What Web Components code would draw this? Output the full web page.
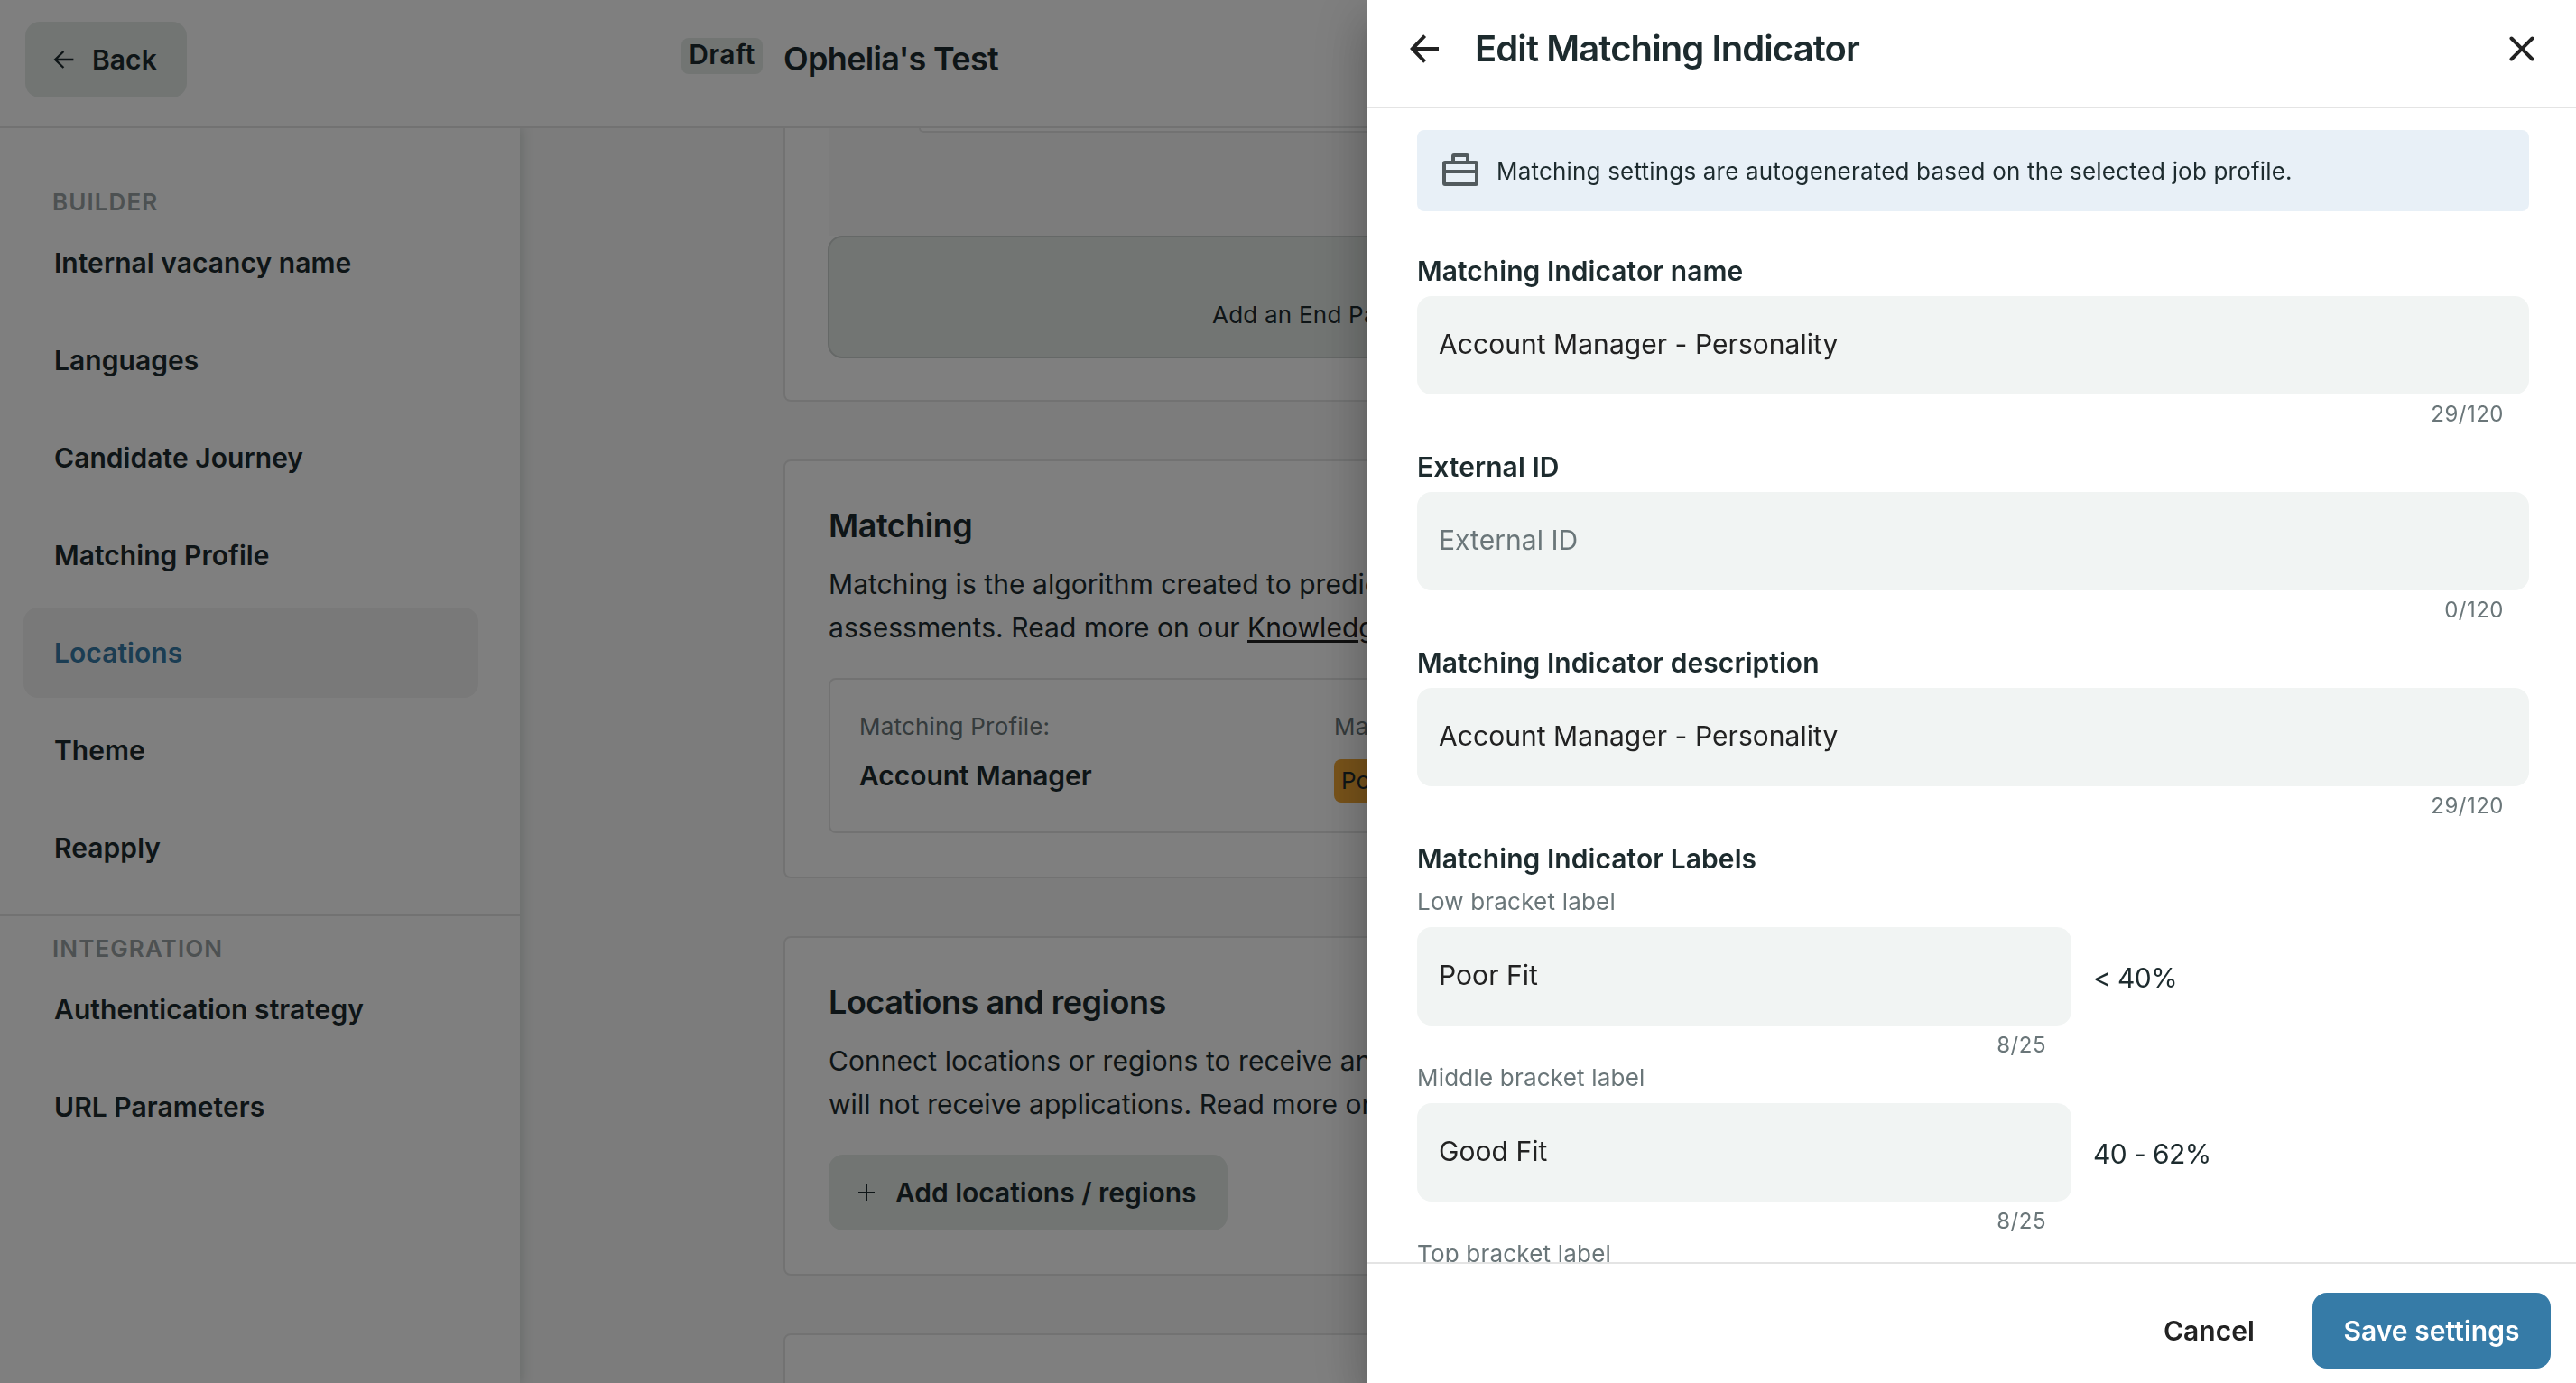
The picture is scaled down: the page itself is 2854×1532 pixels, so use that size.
<!DOCTYPE html>
<html lang="en">
<head>
  <meta charset="utf-8">
  <title>Ophelia's Test</title>
  <style>
    html, body {
      margin: 0;
      height: 100%;
      overflow: hidden;
    }
    body {
      --text: #1d2b2e;
      --muted: #6a7679;
      --line: #e4e5e5;
      --button: #e5eae7;
      --primary: #367ba7;
      font-family: Inter, 'Liberation Sans', sans-serif;
      font-size: 30px;
      line-height: 48px;
      letter-spacing: 0.05px;
      color: var(--text);
    }
  </style>
</head>
<body>
  <vacancy-page></vacancy-page>
  <page-overlay></page-overlay>
  <indicator-drawer></indicator-drawer>

  <script>
    class BaseElement extends HTMLElement {
      constructor() {
        super();
        this.attachShadow({ mode: 'open' });
      }

      connectedCallback() {
        const template = document.createElement('template');
        template.innerHTML = `
          <style>
            * { box-sizing: border-box; }
            ${ this.setStyles() }
          </style>
          ${ this.createTemplate() }
        `;
        this.shadowRoot.appendChild(template.content.cloneNode(true));
      }

      createTemplate() {
        return '<slot></slot>';
      }

      setStyles() {
        return ':host { display: block; }';
      }
    }

    class UiIcon extends BaseElement {
      createTemplate() {
        const icons = {
          'arrow-small': '<svg width="24" height="24" viewBox="0 0 24 24" stroke-width="2.4"><path d="M12.4 3 L3.2 12 L12.4 21 M3.2 12 H23.4"/></svg>',
          'arrow': '<svg width="36" height="36" viewBox="0 0 36 36" stroke-width="4"><path d="M18.6 3.6 L4.8 18 L18.6 32.4 M4.8 18 H34"/></svg>',
          'plus': '<svg width="20" height="20" viewBox="0 0 20 20" stroke-width="2"><path d="M10 1 V19 M1 10 H19"/></svg>',
          'close': '<svg width="32" height="32" viewBox="0 0 32 32" stroke-width="4" stroke-linecap="round"><path d="M4.5 4.5 L27.5 27.5 M27.5 4.5 L4.5 27.5"/></svg>',
          'briefcase': '<svg width="40" height="36" viewBox="0 0 40 36" stroke-width="4" stroke-linejoin="round"><path d="M3 10 H37 Q38 10 38 11 V33 Q38 34 37 34 H3 Q2 34 2 33 V11 Q2 10 3 10 Z M2 20 H38 M12 10 V3 Q12 2 13 2 H27 Q28 2 28 3 V10"/></svg>'
        };
        return icons[this.getAttribute('name')];
      }

      setStyles() {
        return /*css*/ `
          :host { display: flex; flex: none; }
          svg { fill: none; stroke: currentColor; }
        `;
      }
    }

    class UiButton extends BaseElement {
      setStyles() {
        return /*css*/ `
          :host {
            display: flex;
            align-items: center;
            flex: none;
            height: 84px;
            padding: 0 34px;
            border-radius: 16px;
            font-weight: 600;
            background: var(--button);
            box-sizing: border-box;
            white-space: nowrap;
          }
          :host([variant="primary"]) {
            background: var(--primary);
            color: #fff;
          }
          :host([variant="text"]) {
            background: none;
            color: #222;
          }
        `;
      }
    }

    class PageHeader extends BaseElement {
      createTemplate() {
        return /*html*/ `
          <ui-button><ui-icon name="arrow-small"></ui-icon>Back</ui-button>
          <span class="badge">Draft</span>
          <h1><slot></slot></h1>
        `;
      }

      setStyles() {
        return /*css*/ `
          :host {
            display: flex;
            align-items: flex-start;
            flex: none;
            height: 142px;
            padding: 24px 28px;
            background: #fff;
            border-bottom: 2px solid var(--line);
            box-sizing: border-box;
          }
          ui-button {
            width: 179px;
            padding: 0 0 0 30px;
          }
          ui-icon { margin-right: 20px; }
          .badge {
            width: 90px;
            height: 40px;
            margin: 18px 23px 0 548px;
            border-radius: 8px;
            background: var(--button);
            font-weight: 600;
            line-height: 36px;
            letter-spacing: 0.4px;
            text-align: center;
          }
          h1 {
            margin: 17px 0 0;
            font-size: 36px;
            font-weight: 600;
            letter-spacing: -0.68px;
          }
        `;
      }
    }

    class NavItem extends BaseElement {
      setStyles() {
        return /*css*/ `
          :host {
            display: flex;
            align-items: center;
            height: 100px;
            padding-left: 34px;
            border-radius: 16px;
            font-weight: 600;
            box-sizing: border-box;
          }
          :host([active]) {
            background: #f2f2f2;
            color: var(--primary);
          }
        `;
      }
    }

    class NavSection extends BaseElement {
      createTemplate() {
        return /*html*/ `
          <div class="title">${ this.getAttribute('heading') }</div>
          <div class="items"><slot></slot></div>
        `;
      }

      setStyles() {
        return /*css*/ `
          :host {
            display: block;
            padding: 64px 46px 24px 26px;
          }
          :host(:not(:first-of-type)) {
            padding-top: 18px;
            border-top: 2px solid var(--line);
          }
          .title {
            padding-left: 32px;
            color: #9aa3a4;
            font-size: 26px;
            font-weight: 600;
            line-height: 35px;
            letter-spacing: 1.1px;
          }
          .items {
            display: flex;
            flex-direction: column;
            gap: 8px;
          }
        `;
      }
    }

    class SideNav extends BaseElement {
      createTemplate() {
        return /*html*/ `
          <nav-section heading="BUILDER">
            <nav-item>Internal vacancy name</nav-item>
            <nav-item>Languages</nav-item>
            <nav-item>Candidate Journey</nav-item>
            <nav-item>Matching Profile</nav-item>
            <nav-item active>Locations</nav-item>
            <nav-item>Theme</nav-item>
            <nav-item>Reapply</nav-item>
          </nav-section>
          <nav-section heading="INTEGRATION">
            <nav-item>Authentication strategy</nav-item>
            <nav-item>URL Parameters</nav-item>
          </nav-section>
        `;
      }

      setStyles() {
        return /*css*/ `
          :host {
            display: block;
            flex: none;
            width: 576px;
            background: #fff;
            box-shadow: 2px 0 12px 1px #d4dad7;
            clip-path: inset(0 -30px 0 0);
          }
        `;
      }
    }

    class PageCard extends BaseElement {
      createTemplate() {
        return /*html*/ `
          <h2>${ this.getAttribute('heading') || '' }</h2>
          <slot></slot>
        `;
      }

      setStyles() {
        return /*css*/ `
          :host {
            display: block;
            width: 1160px;
            padding: 47px 48px 48px;
            border: 2px solid var(--line);
            border-radius: 8px;
            background: #fff;
            box-sizing: border-box;
          }
          h2 {
            margin: 0 0 17px;
            font-size: 36px;
            font-weight: 600;
            letter-spacing: -0.48px;
            line-height: 48px;
          }
          ::slotted(p) {
            margin: 0 0 32px !important;
            white-space: nowrap;
          }
        `;
      }
    }

    // Lower end of the journey builder, scrolled under the header
    class JourneyCard extends BaseElement {
      createTemplate() {
        return /*html*/ `
          <div class="canvas"><div class="step"></div></div>
          <div class="add">Add an End Page</div>
        `;
      }

      setStyles() {
        return /*css*/ `
          :host {
            display: block;
            width: 1160px;
            height: 303px;
            padding: 0 47px;
            border: 2px solid var(--line);
            border-top: 0;
            border-radius: 0 0 8px 8px;
            background: #fff;
            box-sizing: border-box;
          }
          .canvas {
            height: 119px;
            margin-left: 1px;
            padding-left: 100px;
            background: #f9f9f9;
          }
          .step {
            width: 860px;
            height: 5px;
            border: 2px solid var(--line);
            border-top: 0;
            border-radius: 0 0 12px 12px;
            background: #fff;
          }
          .add {
            display: flex;
            flex-direction: column;
            justify-content: flex-end;
            height: 136px;
            padding: 0 0 26px 424px;
            border: 2px solid #cbd0ce;
            border-radius: 16px;
            background: var(--button);
            font-size: 26px;
            line-height: 40px;
            letter-spacing: 0.23px;
          }
        `;
      }
    }

    class MatchingSummary extends BaseElement {
      createTemplate() {
        return /*html*/ `
          <div class="column">
            <span class="label">Matching Profile:</span>
            <span class="value">Account Manager</span>
          </div>
          <div class="column">
            <span class="label">Matching</span>
            <span class="chip">Poor</span>
          </div>
        `;
      }

      setStyles() {
        return /*css*/ `
          :host {
            display: flex;
            height: 172px;
            padding: 32px 32px 30px;
            border: 2px solid var(--line);
            border-radius: 8px;
            box-sizing: border-box;
          }
          .column {
            display: flex;
            flex-direction: column;
            flex: none;
            align-items: flex-start;
            width: 526px;
          }
          .label {
            margin-bottom: 10px;
            color: var(--muted);
            font-size: 26px;
            line-height: 40px;
            letter-spacing: 0.2px;
          }
          .value {
            font-weight: 600;
            letter-spacing: -0.05px;
          }
          .chip {
            margin-top: 6px;
            padding: 0 8px;
            border-radius: 8px;
            background: #f0a634;
            font-size: 26px;
          }
        `;
      }
    }

    class VacancyPage extends BaseElement {
      createTemplate() {
        return /*html*/ `
          <page-header>Ophelia's Test</page-header>
          <div class="body">
            <side-nav></side-nav>
            <main>
              <journey-card></journey-card>
              <page-card heading="Matching">
                <p>Matching is the algorithm created to predict<br>assessments. Read more on our <a>Knowledge</a></p>
                <matching-summary></matching-summary>
              </page-card>
              <page-card heading="Locations and regions">
                <p>Connect locations or regions to receive and<br>will not receive applications. Read more on</p>
                <ui-button class="add"><ui-icon name="plus"></ui-icon>Add locations / regions</ui-button>
              </page-card>
              <page-card></page-card>
            </main>
          </div>
        `;
      }

      setStyles() {
        return /*css*/ `
          :host {
            display: flex;
            flex-direction: column;
            height: 100vh;
          }
          .body {
            display: flex;
            flex: 1;
            min-height: 0;
            background: #f8f8f8;
          }
          main {
            display: flex;
            flex-direction: column;
            gap: 64px;
            padding-left: 292px;
            overflow: hidden;
          }
          main > * { flex: none; }
          a {
            color: #222;
            text-decoration: underline;
            text-decoration-thickness: 3px;
            text-underline-offset: 3px;
          }
          .add {
            width: 442px;
            padding: 0 0 0 32px;
            letter-spacing: -0.03px;
          }
          .add ui-icon { margin-right: 22px; }
        `;
      }
    }

    class PageOverlay extends BaseElement {
      setStyles() {
        return /*css*/ `
          :host {
            position: fixed;
            inset: 0;
            background: rgba(0, 0, 0, 0.5);
          }
        `;
      }
    }

    class InfoBanner extends BaseElement {
      createTemplate() {
        return '<ui-icon name="briefcase"></ui-icon><span><slot></slot></span>';
      }

      setStyles() {
        return /*css*/ `
          :host {
            display: flex;
            align-items: center;
            gap: 20px;
            height: 90px;
            padding: 0 28px;
            border-radius: 8px;
            background: #e8f0f7;
            font-size: 26px;
            letter-spacing: 0.19px;
            box-sizing: border-box;
          }
          ui-icon {
            padding-bottom: 2px;
            color: #525b5e;
          }
          span { padding-top: 2px; }
        `;
      }
    }

    class TextField extends BaseElement {
      createTemplate() {
        const value = this.getAttribute('value') || '';
        const placeholder = this.getAttribute('placeholder') || '';
        const range = this.getAttribute('range');
        return /*html*/ `
          <div class="label">${ this.getAttribute('label') }</div>
          <div class="row">
            <div class="input ${ value ? '' : 'empty' }">${ value || placeholder }</div>
            ${ range ? `<span class="range">${ range }</span>` : '' }
          </div>
          <div class="counter">${ value.length }/${ this.getAttribute('max') }</div>
        `;
      }

      setStyles() {
        return /*css*/ `
          :host { display: block; margin-bottom: 16px; }
          .label {
            margin-bottom: 4px;
            font-weight: 600;
          }
          .row {
            display: flex;
            align-items: center;
            gap: 24px;
          }
          .input {
            display: flex;
            align-items: center;
            flex: 1;
            height: 109px;
            padding: 0 24px 3px;
            border-radius: 16px;
            background: #f1f4f3;
            color: #222;
          }
          .input.empty { color: var(--muted); }
          .counter {
            padding: 4px 28px 0 0;
            color: var(--muted);
            font-size: 24px;
            line-height: 36px;
            letter-spacing: 0.5px;
            text-align: right;
          }
          .range {
            padding-top: 3px;
            letter-spacing: -0.6px;
          }

          :host([small]) { margin-bottom: 0; }
          :host([small]) .label {
            margin-bottom: 8px;
            color: var(--muted);
            font-size: 26px;
            font-weight: 400;
            line-height: 40px;
            letter-spacing: 0.2px;
          }
          :host([small]) .input {
            flex: none;
            width: 725px;
          }
          :host([small]) .counter {
            width: 725px;
            padding-top: 5px;
            line-height: 33px;
          }
        `;
      }
    }

    class IndicatorDrawer extends BaseElement {
      createTemplate() {
        return /*html*/ `
          <header>
            <ui-icon name="arrow"></ui-icon>
            <h2>Edit Matching Indicator</h2>
            <ui-icon name="close"></ui-icon>
          </header>
          <div class="content">
            <info-banner>Matching settings are autogenerated based on the selected job profile.</info-banner>
            <text-field label="Matching Indicator name" value="Account Manager - Personality" max="120"></text-field>
            <text-field label="External ID" placeholder="External ID" max="120"></text-field>
            <text-field label="Matching Indicator description" value="Account Manager - Personality" max="120"></text-field>
            <h3>Matching Indicator Labels</h3>
            <text-field small label="Low bracket label" value="Poor Fit" range="&lt; 40%" max="25"></text-field>
            <text-field small label="Middle bracket label" value="Good Fit" range="40 - 62%" max="25"></text-field>
            <div class="next-label">Top bracket label</div>
          </div>
          <footer>
            <ui-button variant="text">Cancel</ui-button>
            <ui-button variant="primary">Save settings</ui-button>
          </footer>
        `;
      }

      setStyles() {
        return /*css*/ `
          :host {
            position: fixed;
            top: 0;
            right: 0;
            bottom: 0;
            display: flex;
            flex-direction: column;
            width: 1340px;
            background: #fff;
            box-shadow:
              0 16px 20px -10px rgba(0, 0, 0, 0.2),
              0 32px 48px 4px rgba(0, 0, 0, 0.14),
              0 12px 60px 10px rgba(0, 0, 0, 0.12);
          }
          header {
            display: flex;
            align-items: center;
            flex: none;
            height: 120px;
            padding: 0 44px 10px 46px;
            border-bottom: 2px solid #e4e4e4;
          }
          header ui-icon { color: #222; }
          h2 {
            flex: 1;
            margin: 0 0 0 38px;
            font-size: 40px;
            font-weight: 600;
            letter-spacing: -0.91px;
          }
          .content {
            flex: 1;
            min-height: 0;
            padding: 24px 52px 0 56px;
            overflow: hidden;
          }
          info-banner { margin-bottom: 42px; }
          h3 {
            margin: 0 0 4px;
            font-size: 30px;
            font-weight: 600;
          }
          .next-label {
            color: var(--muted);
            font-size: 26px;
            line-height: 40px;
            letter-spacing: 0.2px;
          }
          footer {
            display: flex;
            justify-content: flex-end;
            gap: 30px;
            flex: none;
            height: 134px;
            padding: 32px 28px 0;
            border-top: 2px solid #e4e4e4;
          }
          footer ui-button[variant="primary"] {
            justify-content: center;
            width: 264px;
            padding: 0;
          }
        `;
      }
    }

    customElements.define('ui-icon', UiIcon);
    customElements.define('ui-button', UiButton);
    customElements.define('page-header', PageHeader);
    customElements.define('nav-item', NavItem);
    customElements.define('nav-section', NavSection);
    customElements.define('side-nav', SideNav);
    customElements.define('page-card', PageCard);
    customElements.define('journey-card', JourneyCard);
    customElements.define('matching-summary', MatchingSummary);
    customElements.define('vacancy-page', VacancyPage);
    customElements.define('page-overlay', PageOverlay);
    customElements.define('info-banner', InfoBanner);
    customElements.define('text-field', TextField);
    customElements.define('indicator-drawer', IndicatorDrawer);
  </script>
</body>
</html>
